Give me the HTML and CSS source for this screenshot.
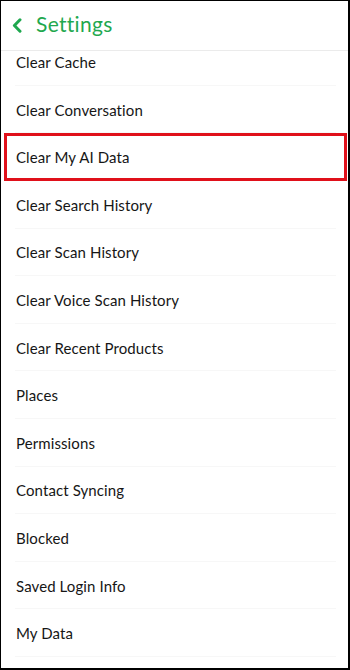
FILE: index.html
```html
<!DOCTYPE html>
<html>
<head>
<meta charset="utf-8">
<link rel="stylesheet" href="styles.css">
</head>
<body>
<div class="frame">
  <header class="header">
    <svg class="back" width="10" height="15" viewBox="0 0 10 15"><path d="M8 1.8 L2.4 7.5 L8 13.2" fill="none" stroke="#1fa84f" stroke-width="3" stroke-linecap="round" stroke-linejoin="round"/></svg>
    <span class="title">Settings</span>
  </header>
  <div class="scroll">
    <ul class="list">
      <li class="row">Clear Cache</li>
      <li class="row">Clear Conversation</li>
      <li class="row highlight">Clear My AI Data</li>
      <li class="row">Clear Search History</li>
      <li class="row">Clear Scan History</li>
      <li class="row">Clear Voice Scan History</li>
      <li class="row">Clear Recent Products</li>
      <li class="row">Places</li>
      <li class="row">Permissions</li>
      <li class="row">Contact Syncing</li>
      <li class="row">Blocked</li>
      <li class="row">Saved Login Info</li>
      <li class="row">My Data</li>
      <li class="row"></li>
    </ul>
  </div>
</div>
</body>
</html>
```
FILE: styles.css
```css
html, body {
  margin: 0;
  padding: 0;
  background: #fff;
}
body {
  font-family: Lato, "Noto Sans", sans-serif;
}
.frame {
  box-sizing: border-box;
  width: 350px;
  height: 670px;
  border-style: solid;
  border-color: #000;
  border-width: 1px 2px 2px 1px;
  display: flex;
  flex-direction: column;
  overflow: hidden;
}
.header {
  flex: 0 0 auto;
  height: 49px;
  border-bottom: 1px solid #ebebeb;
  display: flex;
  align-items: center;
  padding-left: 11px;
  gap: 14px;
  background: #fff;
}
.back {
  display: block;
  margin-top: -1px;
}
.title {
  color: #1fa84f;
  font-size: 21px;
  letter-spacing: 0.3px;
  margin-top: -4px;
}
.scroll {
  flex: 1 1 auto;
  overflow: hidden;
}
.list {
  list-style: none;
  margin: -12.8px 0 0 0;
  padding: 0;
}
.row {
  box-sizing: border-box;
  height: 47.6px;
  display: flex;
  align-items: center;
  padding-left: 15px;
  font-size: 15px;
  letter-spacing: 0.1px;
  color: #161616;
  position: relative;
}
.row::after {
  content: "";
  position: absolute;
  left: 14px;
  right: 12px;
  bottom: 0;
  height: 1px;
  background: #f7f7f7;
}
.highlight {
  margin: 0 1px 0 3px;
  border: 3px solid #e0101a;
  padding-left: 9px;
}
.highlight::after {
  display: none;
}
```
